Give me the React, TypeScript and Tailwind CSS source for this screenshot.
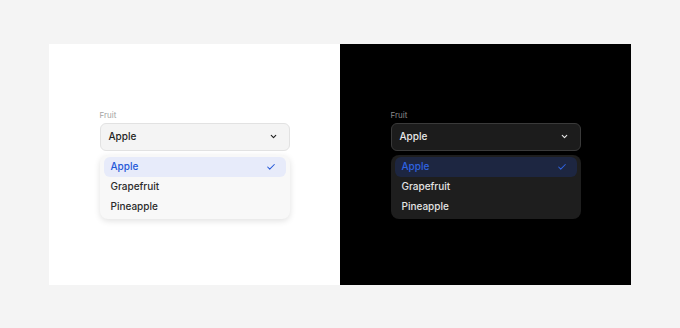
import { ChevronDown, Check } from "lucide-react";

const fruits = ["Apple", "Grapefruit", "Pineapple"];

function FruitSelect({ dark }: { dark: boolean }) {
  return (
    <div className="w-[190px]">
      <div className={`text-[8px] leading-[10px] mb-[3px] ${dark ? "text-[#8a8a8a]" : "text-[#a3a3a3]"}`}>Fruit</div>
      <div
        className={`h-[28px] flex items-center justify-between pl-2 pr-[11px] rounded-[6px] border text-[10px] font-medium ${
          dark ? "bg-[#1c1c1c] border-[#3a3a3a] text-[#e8e8e8]" : "bg-[#f4f4f4] border-[#e2e2e2] text-[#1f1f1f]"
        }`}
      >
        <span>Apple</span>
        <ChevronDown className="w-[9px] h-[9px]" strokeWidth={3} />
      </div>
      <div
        className={`mt-1 rounded-[8px] px-1 py-[2px] text-[10px] font-medium ${
          dark ? "bg-[#1e1e1e] text-[#e4e4e4]" : "bg-[#f8f8f8] text-[#2a2a2a] shadow-[0_2px_6px_rgba(0,0,0,0.12)]"
        }`}
      >
        {fruits.map((f, i) => (
          <div
            key={f}
            className={`h-[20px] flex items-center justify-between pl-[7px] pr-[10px] rounded-[6px] ${
              i === 0 ? (dark ? "bg-[#1d2641] text-[#2f63e0]" : "bg-[#e7ebfa] text-[#2458d8]") : ""
            }`}
          >
            <span>{f}</span>
            {i === 0 && <Check className="w-[10px] h-[10px]" strokeWidth={2.5} />}
          </div>
        ))}
      </div>
    </div>
  );
}

export default function App() {
  return (
    <div className="w-[680px] h-[328px] bg-[#f4f4f4] flex items-center justify-center" style={{ fontFamily: "Inter, 'Noto Sans', sans-serif" }}>
      <div className="flex">
        <div className="w-[291px] h-[241px] bg-white flex justify-center pt-[66px]">
          <FruitSelect dark={false} />
        </div>
        <div className="w-[291px] h-[241px] bg-black flex justify-center pt-[66px]">
          <FruitSelect dark={true} />
        </div>
      </div>
    </div>
  );
}
